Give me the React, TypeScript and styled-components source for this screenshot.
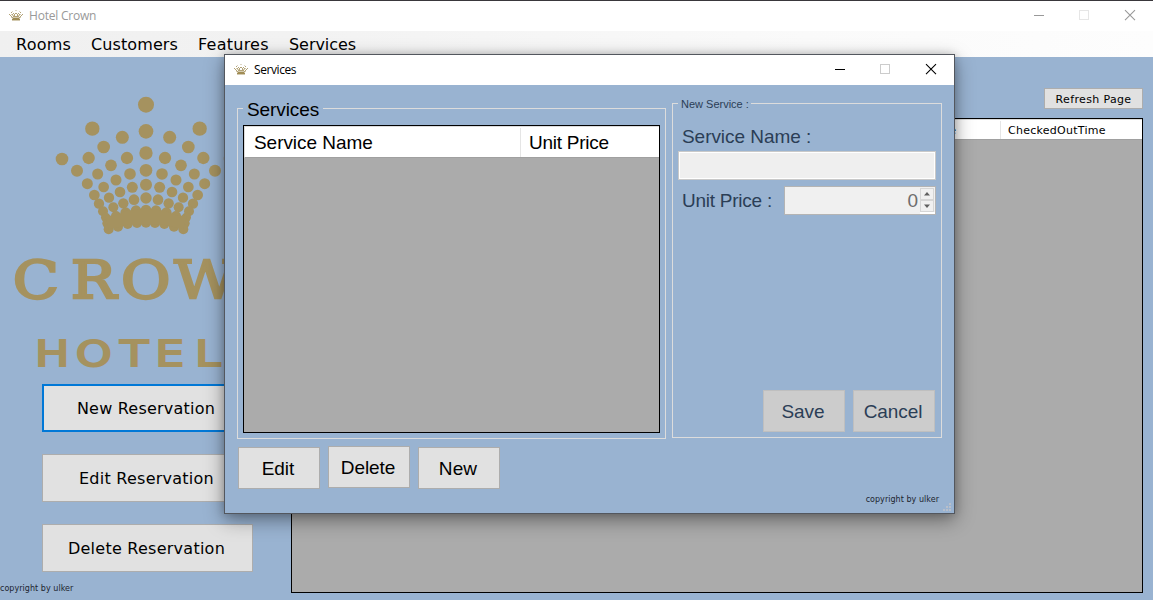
import React from "react";
import styled, { createGlobalStyle } from "styled-components";

const BLUE = "#99b3d1";
const GOLD = "#a5925f";

const Global = createGlobalStyle`
  * { box-sizing: border-box; }
  body { margin: 0; overflow: hidden; }
  button { padding: 0; margin: 0; border-radius: 0; }
`;

const verdana = `"DejaVu Sans", Verdana, sans-serif`;
const segoe = `"Open Sans", "Segoe UI", sans-serif`;
const sans = `"Liberation Sans", Arial, sans-serif`;

const Desktop = styled.div`
  position: relative;
  width: 1153px;
  height: 600px;
  overflow: hidden;
  display: flex;
  flex-direction: column;
  background: ${BLUE};
  border-top: 1px solid #39373b;
`;

const TitleBar = styled.header<{ $pad: number }>`
  display: flex;
  align-items: center;
  flex: none;
  height: 30px;
  padding-left: ${(p) => p.$pad}px;
  background: #fff;
`;

const Title = styled.span<{ $dim?: boolean; $ls: number }>`
  flex: 1;
  margin-left: 6px;
  font: 12px/16px ${segoe};
  letter-spacing: ${(p) => p.$ls}px;
  color: ${(p) => (p.$dim ? "#999" : "#000")};
`;

const Caption = styled.svg<{ $w: number }>`
  flex: none;
  width: ${(p) => p.$w}px;
  height: 30px;
`;

const MenuBar = styled.nav`
  display: flex;
  flex: none;
  height: 26px;
  padding-left: 16px;
  background: linear-gradient(90deg, #f0f0f0, #f2f2f2 25%, #fafafa 70%, #fdfdfd);
`;

const MenuItem = styled.span<{ $w: number; $ls: number }>`
  width: ${(p) => p.$w}px;
  font: 16px/28px ${verdana};
  letter-spacing: ${(p) => p.$ls}px;
  white-space: nowrap;
  color: #000;
`;

const Main = styled.main`
  display: flex;
  flex: 1;
  min-height: 0;
`;

const Sidebar = styled.aside`
  display: flex;
  flex-direction: column;
  width: 291px;
`;

const Logo = styled.svg`
  display: block;
  flex: none;
  width: 291px;
  height: 327px;
  overflow: visible;
`;

const SideButton = styled.button<{ $active?: boolean; $ls: number }>`
  flex: none;
  width: ${(p) => (p.$active ? 212 : 211)}px;
  height: 48px;
  margin: 0 0 22px 42px;
  padding: ${(p) => (p.$active ? "2px 4px 0 0" : "2px 2px 0 0")};
  background: #e1e1e1;
  border: ${(p) => (p.$active ? "2px solid #0078d7" : "1px solid #adadad")};
  font: 16px/20px ${verdana};
  letter-spacing: ${(p) => p.$ls}px;
  color: #000;
`;

const Copyright = styled.small<{ $dialog?: boolean }>`
  display: block;
  margin-top: ${(p) => (p.$dialog ? 1 : -11)}px;
  font: 8px/12px ${verdana};
  letter-spacing: 0.04px;
  white-space: nowrap;
  color: #1c2530;
`;

const Content = styled.section`
  display: flex;
  flex-direction: column;
  width: 852px;
  padding-top: 31px;
`;

const Refresh = styled.button`
  align-self: flex-end;
  width: 99px;
  height: 21px;
  margin-bottom: 9px;
  padding-top: 2px;
  background: #e1e1e1;
  border: 1px solid #adadad;
  font: 11px/14px ${verdana};
  letter-spacing: 0.35px;
  color: #000;
`;

const GridBox = styled.div<{ $h: number; $top?: number }>`
  height: ${(p) => p.$h}px;
  margin-top: ${(p) => p.$top ?? 0}px;
  border: 1px solid #000;
  background: #ababab;
`;

const GridHead = styled.div<{ $h: number }>`
  display: flex;
  height: ${(p) => p.$h}px;
  padding: 1px 0 0 1px;
  background: #fff;
  border-top: 1px solid #dcdcdc;
  border-left: 1px solid #dcdcdc;
  border-bottom: 1px solid #a0a0a0;
`;

const Column = styled.div<{ $w: number; $size: number; $font: string; $last?: boolean; $right?: boolean; $ls?: number }>`
  width: ${(p) => p.$w}px;
  flex: none;
  display: flex;
  align-items: center;
  justify-content: ${(p) => (p.$right ? "flex-end" : "flex-start")};
  padding: ${(p) => (p.$right ? "1px 44px 0 0" : p.$size > 15 ? "0 0 0 8px" : "1px 0 0 7px")};
  border-right: ${(p) => (p.$last ? "none" : "1px solid #e5e5e5")};
  font-family: ${(p) => p.$font};
  font-size: ${(p) => p.$size}px;
  letter-spacing: ${(p) => p.$ls ?? 0}px;
  white-space: nowrap;
  color: #000;
`;

const Dialog = styled.div`
  position: absolute;
  left: 224px;
  top: 53px;
  width: 731px;
  height: 460px;
  display: flex;
  flex-direction: column;
  background: ${BLUE};
  border: 1px solid #53575e;
  box-shadow: 0 6px 18px rgba(0, 0, 0, 0.4), 0 0 8px rgba(0, 0, 0, 0.16);
`;

const Panels = styled.div`
  display: flex;
  align-items: flex-start;
  gap: 6px;
  height: 354px;
  padding: 18px 0 0 12px;
`;

const Group = styled.fieldset<{ $w: number; $h: number; $top?: number }>`
  display: block;
  min-width: 0;
  width: ${(p) => p.$w}px;
  height: ${(p) => p.$h}px;
  margin: ${(p) => p.$top ?? 0}px 0 0;
  padding: 0 5px;
  border: 1px solid #dcdcdc;
`;

const Legend = styled.legend<{ $size: number; $lh: number; $h: number; $color: string; $pad: string; $ls?: number }>`
  font: ${(p) => p.$size}px/${(p) => p.$lh}px ${sans};
  letter-spacing: ${(p) => p.$ls ?? 0}px;
  padding: ${(p) => p.$pad};
  height: ${(p) => p.$h}px;
  color: ${(p) => p.$color};
`;

const FieldLabel = styled.label<{ $top?: number; $ls?: number }>`
  display: block;
  margin-top: ${(p) => p.$top ?? 0}px;
  padding-left: 4px;
  font: 19px/24px ${sans};
  letter-spacing: ${(p) => p.$ls ?? 0}px;
  white-space: nowrap;
  color: #2b3e56;
`;

const NameInput = styled.div`
  width: 258px;
  height: 29px;
  margin-top: 2px;
  background: #efefef;
  border: 1px solid #c9c9c9;
  box-shadow: inset 0 0 0 1px #fff;
`;

const PriceRow = styled.div`
  display: flex;
  justify-content: space-between;
  align-items: center;
  height: 29px;
  width: 258px;
  margin-top: 6px;
`;

const NumberBox = styled.div`
  display: flex;
  justify-content: flex-end;
  width: 152px;
  height: 29px;
  background: #f0f0f0;
  border: 1px solid #b4b4b4;
  font: 19px/27px ${sans};
  color: #6d6d6d;
`;

const Spinner = styled.svg`
  width: 15px;
  height: 27px;
  margin-left: 2px;
`;

const FormActions = styled.div`
  display: flex;
  gap: 8px;
  margin: 175px 0 0 85px;
`;

const PushButton = styled.button<{ $off?: boolean; $raised?: boolean; $ls?: number }>`
  width: 82px;
  height: 42px;
  margin-top: ${(p) => (p.$raised ? -1 : 0)}px;
  padding: 2px 2px 0 0;
  background: ${(p) => (p.$off ? "#cccccc" : "#e1e1e1")};
  border: 1px solid ${(p) => (p.$off ? "#bfbfbf" : "#adadad")};
  font: 19px/24px ${sans};
  letter-spacing: ${(p) => p.$ls ?? 0}px;
  color: ${(p) => (p.$off ? "#2b3e56" : "#000")};
`;

const Actions = styled.div`
  display: flex;
  align-items: flex-start;
  gap: 8px;
  padding: 8px 0 0 13px;
  height: 54px;
`;

const Footer = styled.footer`
  display: flex;
  justify-content: flex-end;
  gap: 4px;
  height: 20px;
  padding-right: 2px;
`;

const Grip = styled.svg`
  width: 9px;
  height: 9px;
  margin-top: 10px;
`;

/* Left half of the crown, mirrored around x = 438 (three units per pixel). */
const dots: number[][] = [
  [438, 74, 24], [438, 154, 22], [438, 219, 20], [438, 271, 19], [438, 314, 18], [438, 354, 17],
  [367, 172, 19.5], [381, 234, 18.5], [390, 282, 17.5], [397, 322, 16.5], [402, 359, 16],
  [277, 146, 21.5], [311, 201, 19], [333, 256, 17.5], [348, 300, 16.5], [360, 336, 16], [370, 370, 15.5],
  [266, 234, 18.5], [293, 282, 16.5], [311, 321, 16], [327, 353, 15.5], [340, 382, 15],
  [186, 237, 19], [231, 272, 18], [262, 311, 16.5], [283, 345, 16], [297, 371, 15.5], [309, 394, 15],
  [438, 390, 16], [408, 392, 16], [377, 398, 16], [348, 408, 15],
  [317, 412, 14], [321, 430, 14], [326, 448, 15], [354, 440, 15], [383, 432, 15], [411, 429, 15], [438, 428, 15],
];

const CrownDots = () => (
  <>
    {dots.map(([x, y, r], i) => (
      <React.Fragment key={i}>
        <circle cx={x} cy={y} r={r} />
        {x !== 438 && <circle cx={876 - x} cy={y} r={r} />}
      </React.Fragment>
    ))}
    <path d="M316 408L348 406L380 392L438 386L496 392L528 406L560 408L550 448L522 442L493 434L438 432L383 434L354 442L326 448Z" />
  </>
);

const BrandLogo = () => (
  <Logo viewBox="0 0 291 327" fill={GOLD}>
    <g transform="translate(0 23) scale(.33333)">
      <CrownDots />
    </g>
    <text
      y="241.500"
      transform="scale(1.15 1)"
      x="11.2 61.6 105.2 151.6 205"
      fontFamily="DejaVu Serif"
      fontSize="52.5"
      stroke={GOLD}
      strokeWidth="2.4"
    >
      CROWN
    </text>
    <text
      y="309"
      transform="scale(1.27 1)"
      x="27.5 59.6 94.6 122.3 153.6"
      fontFamily="DejaVu Sans"
      fontSize="36"
      stroke={GOLD}
      strokeWidth="2"
    >
      HOTEL
    </text>
  </Logo>
);

const CrownIcon = () => (
  <svg width="14" height="14" viewBox="0 0 14 14" fill="#a08c55" shapeRendering="crispEdges">
    <path fill="#ddd6c4" d="M6 1h2v1h-2zM3 2h1v1h-1zM10 2h1v1h-1z" />
    <path opacity=".8" d="M0 5h1v1h-1zM13 5h1v1h-1zM2 3h1v1h-1zM11 3h1v1h-1zM4 4h1v1h-1zM9 4h1v1h-1zM1 6h1v1h-1zM3 5h1v1h-1zM10 5h1v1h-1zM12 6h1v1h-1zM5 5h1v3h-1zM8 5h1v3h-1zM6 4h2v1h-2zM2 7h1v1h-1zM11 7h1v1h-1zM4 7h1v1h-1zM9 7h1v1h-1zM3 8h1v1h-1zM10 8h1v1h-1zM6 7h2v1h-2z" />
    <path d="M4 9h6v1h-6zM3 10h8v1h-8z" />
    <path opacity=".45" d="M2 5h1v1h-1zM11 5h1v1h-1zM3 6h2v1h-2zM9 6h2v1h-2zM2 8h1v1h-1zM11 8h1v1h-1zM4 8h6v1h-6zM3 9h1v1h-1zM10 9h1v1h-1zM3 11h8v1h-8z" />
  </svg>
);

const CaptionButtons = ({ w, color, box }: { w: number; color: string; box: string }) => (
  <Caption $w={w} viewBox={`0 0 ${w} 30`} fill="none" stroke={color}>
    <path d="M10 14.5h10" shapeRendering="crispEdges" />
    <rect x="55.5" y="9.5" width="9" height="9" stroke={box} />
    <path d="M101 9.2l10 10M111 9.2l-10 10" strokeWidth="1.1" />
  </Caption>
);

export default function App() {
  return (
    <Desktop>
      <Global />
      <TitleBar $pad={9}>
        <CrownIcon />
        <Title $dim $ls={-0.22}>Hotel Crown</Title>
        <CaptionButtons w={129} color="#999" box="#e6e6e6" />
      </TitleBar>
      <MenuBar>
        <MenuItem $w={75} $ls={0.25}>Rooms</MenuItem>
        <MenuItem $w={107} $ls={0.1}>Customers</MenuItem>
        <MenuItem $w={91} $ls={0.25}>Features</MenuItem>
        <MenuItem $w={80} $ls={-0.05}>Services</MenuItem>
      </MenuBar>
      <Main>
        <Sidebar>
          <BrandLogo />
          <SideButton $active $ls={0.22}>New Reservation</SideButton>
          <SideButton $ls={0.25}>Edit Reservation</SideButton>
          <SideButton $ls={0.25}>Delete Reservation</SideButton>
          <Copyright>copyright by ulker</Copyright>
        </Sidebar>
        <Content>
          <Refresh>Refresh Page</Refresh>
          <GridBox $h={475}>
            <GridHead $h={21}>
              <Column $w={707} $size={11} $font={verdana} $right>CheckedInTime</Column>
              <Column $w={140} $size={11} $font={verdana} $last $ls={0.27}>CheckedOutTime</Column>
            </GridHead>
          </GridBox>
        </Content>
      </Main>

      <Dialog>
        <TitleBar $pad={9}>
          <CrownIcon />
          <Title $ls={-0.42}>Services</Title>
          <CaptionButtons w={129} color="#000" box="#ccc" />
        </TitleBar>
        <Panels>
          <Group $w={429} $h={340} $top={-4}>
            <Legend $size={19} $lh={21} $h={18} $color="#000" $pad="0 4px 0 4px" $ls={-0.1}>Services</Legend>
            <GridBox $h={308} $top={8}>
              <GridHead $h={32}>
                <Column $w={275} $size={19} $font={sans} $ls={-0.05}>Service Name</Column>
                <Column $w={138} $size={19} $font={sans} $last $ls={-0.25}>Unit Price</Column>
              </GridHead>
            </GridBox>
          </Group>
          <Group $w={270} $h={341} $top={-6}>
            <Legend $size={11} $lh={14} $h={12} $color="#2b3e56" $pad="0 2px 0 3px">New Service :</Legend>
            <FieldLabel $top={16} $ls={-0.05}>Service Name :</FieldLabel>
            <NameInput />
            <PriceRow>
              <FieldLabel $ls={-0.25}>Unit Price :</FieldLabel>
              <NumberBox>
                0
                <Spinner viewBox="0 0 15 27">
                  <path fill="#fff" d="M0 25h15v2h-15z" />
                  <rect x=".5" y="1.5" width="13" height="11" fill="#f0f0f0" stroke="#d6d6d6" />
                  <rect x=".5" y="13.5" width="13" height="11" fill="#f0f0f0" stroke="#d6d6d6" />
                  <path fill="#606060" d="M4 8.5h6l-3-3.500zM4 17.500h6l-3 3.500z" />
                </Spinner>
              </NumberBox>
            </PriceRow>
            <FormActions>
              <PushButton $off $ls={-0.1}>Save</PushButton>
              <PushButton $off $ls={-0.1}>Cancel</PushButton>
            </FormActions>
          </Group>
        </Panels>
        <Actions>
          <PushButton>Edit</PushButton>
          <PushButton $raised $ls={-0.1}>Delete</PushButton>
          <PushButton $ls={0.1}>New</PushButton>
        </Actions>
        <Footer>
          <Copyright $dialog>copyright by ulker</Copyright>
          <Grip viewBox="0 0 9 9" fill="#b9bfca" shapeRendering="crispEdges">
            <path d="M6 0h2v2h-2zM3 3h2v2h-2zM6 3h2v2h-2zM0 6h2v2h-2zM3 6h2v2h-2zM6 6h2v2h-2z" />
          </Grip>
        </Footer>
      </Dialog>
    </Desktop>
  );
}
